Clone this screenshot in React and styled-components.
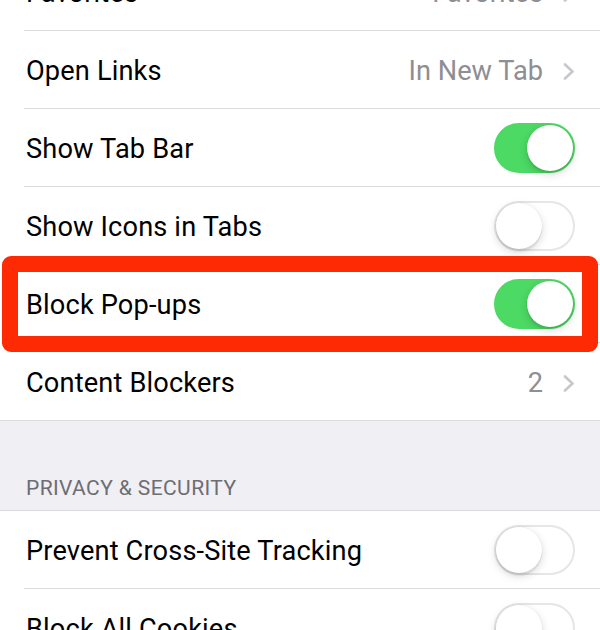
import React from 'react';
import styled, { createGlobalStyle } from 'styled-components';

const Global = createGlobalStyle`
  html, body {
    margin: 0;
    padding: 0;
    background: #ffffff;
    overflow: hidden;
  }
  body {
    font-family: Roboto, "Noto Sans", "Liberation Sans", sans-serif;
    -webkit-font-smoothing: antialiased;
  }
`;

const Screen = styled.div`
  position: relative;
  width: 600px;
  height: 630px;
  overflow: hidden;
  background: #ffffff;
`;

const List = styled.div`
  margin-top: -47px;
  display: flex;
  flex-direction: column;
`;

const Group = styled.div`
  background: #ffffff;
  display: flex;
  flex-direction: column;
`;

const Row = styled.div`
  position: relative;
  height: 78px;
  display: flex;
  align-items: center;
  justify-content: space-between;
  padding: 0 25px 0 26px;
  box-sizing: border-box;

  &::after {
    content: '';
    position: absolute;
    left: ${(p) => (p.$full ? '0' : '24px')};
    right: 0;
    bottom: 0;
    height: 1px;
    background: #dcdce0;
  }
`;

const Label = styled.span`
  font-size: 27.2px;
  color: #000000;
  letter-spacing: 0.15px;
  padding-top: 2px;
`;

const Detail = styled.div`
  display: flex;
  align-items: center;
  gap: 20px;
  font-size: 27.2px;
  color: #8e8e93;
  padding-top: 2px;
`;

const SectionHeader = styled.div`
  height: 90px;
  background: #efeff4;
  display: flex;
  align-items: flex-end;
  padding: 0 0 10px 26px;
  box-sizing: border-box;
  border-bottom: 1px solid #dcdce0;
  font-size: 21px;
  color: #6d6d72;
  letter-spacing: 0.4px;
`;

const Track = styled.div`
  position: relative;
  width: 81px;
  height: 50px;
  border-radius: 25px;
  box-sizing: border-box;
  background: ${(p) => (p.$on ? '#4cd964' : '#ffffff')};
  border: 2px solid ${(p) => (p.$on ? '#4cd964' : '#e5e5ea')};
`;

const Knob = styled.div`
  position: absolute;
  top: 0;
  left: ${(p) => (p.$on ? '31px' : '0')};
  width: 46px;
  height: 46px;
  border-radius: 50%;
  background: #ffffff;
  box-shadow: 0 3px 8px rgba(0, 0, 0, 0.16), 0 3px 1px rgba(0, 0, 0, 0.06),
    0 0 0 0.5px rgba(0, 0, 0, 0.05);
`;

const Highlight = styled.div`
  position: absolute;
  left: 2px;
  right: 2px;
  top: 256px;
  height: 96px;
  border: 16px solid #fe2a04;
  border-radius: 9px;
  box-sizing: border-box;
  pointer-events: none;
`;

const Chevron = () => (
  <svg width="12" height="17" viewBox="0 0 12 17">
    <polyline
      points="2,1.5 9.5,8.5 2,15.5"
      fill="none"
      stroke="#c7c7cc"
      strokeWidth="2.6"
      strokeLinecap="round"
      strokeLinejoin="round"
    />
  </svg>
);

const Toggle = ({ on }) => (
  <Track $on={on}>
    <Knob $on={on} />
  </Track>
);

const general = [
  { label: 'Favorites', value: 'Favorites' },
  { label: 'Open Links', value: 'In New Tab' },
  { label: 'Show Tab Bar', toggle: true, on: true },
  { label: 'Show Icons in Tabs', toggle: true, on: false },
  { label: 'Block Pop-ups', toggle: true, on: true },
  { label: 'Content Blockers', value: '2', last: true },
];

const privacy = [
  { label: 'Prevent Cross-Site Tracking', toggle: true, on: false },
  { label: 'Block All Cookies', toggle: true, on: false },
];

const SettingRow = ({ item }) => (
  <Row $full={item.last}>
    <Label>{item.label}</Label>
    {item.toggle ? (
      <Toggle on={item.on} />
    ) : (
      <Detail>
        {item.value}
        <Chevron />
      </Detail>
    )}
  </Row>
);

export default function App() {
  return (
    <Screen>
      <Global />
      <List>
        <Group>
          {general.map((item) => (
            <SettingRow key={item.label} item={item} />
          ))}
        </Group>
        <SectionHeader>PRIVACY &amp; SECURITY</SectionHeader>
        <Group>
          {privacy.map((item) => (
            <SettingRow key={item.label} item={item} />
          ))}
        </Group>
      </List>
      <Highlight />
    </Screen>
  );
}
